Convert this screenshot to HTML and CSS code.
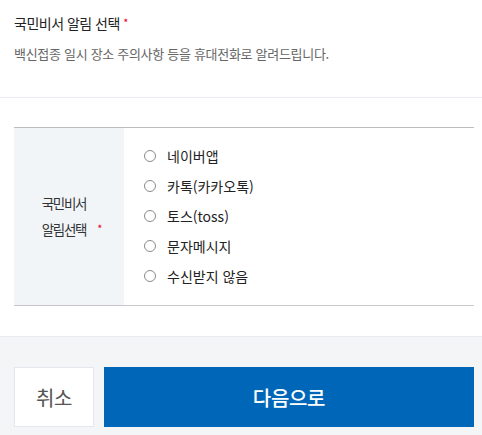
FILE: index.html
```html
<!DOCTYPE html>
<html lang="ko">
<head>
<meta charset="utf-8">
<link rel="stylesheet" href="styles.css">
</head>
<body>
<div class="page">
  <section class="intro">
    <h2 class="title">국민비서 알림 선택 <span class="req">*</span></h2>
    <p class="desc">백신접종 일시 장소 주의사항 등을 휴대전화로 알려드립니다.</p>
  </section>
  <section class="form">
    <div class="row">
      <div class="label"><span class="label-text">국민비서<br>알림선택<span class="req req-after"><span class="req-mark">*</span></span></span></div>
      <div class="options">
        <label class="opt"><span class="radio"></span>네이버앱</label>
        <label class="opt"><span class="radio"></span>카톡(카카오톡)</label>
        <label class="opt"><span class="radio"></span>토스(toss)</label>
        <label class="opt"><span class="radio"></span>문자메시지</label>
        <label class="opt"><span class="radio"></span>수신받지 않음</label>
      </div>
    </div>
  </section>
  <footer class="footer">
    <button class="btn cancel">취소</button>
    <button class="btn next">다음으로</button>
  </footer>
</div>
</body>
</html>
```
FILE: styles.css
```css
* { box-sizing: border-box; }
html, body { margin: 0; padding: 0; background: #fff; }
body {
  font-family: "Noto Sans CJK KR", "Noto Sans", sans-serif;
  color: #222;
  width: 482px;
  height: 435px;
  overflow: hidden;
}
.page { display: flex; flex-direction: column; height: 435px; }
.intro {
  padding: 12px 14px 33px;
  border-bottom: 1px solid #e8ebf0;
}
.title {
  margin: 0;
  font-size: 14px;
  line-height: 20px;
  font-weight: 400;
  letter-spacing: -0.5px;
  color: #222;
}
.req { color: #e60012; font-size: 11px; vertical-align: 2px; }
.desc {
  margin: 11px 0 0;
  font-size: 13px;
  line-height: 20px;
  color: #666;
  letter-spacing: -0.3px;
}
.form { padding: 29px 8px 30px 14px; }
.row {
  display: flex;
  border-top: 1px solid #bdbdbd;
  border-bottom: 1px solid #c8c8cc;
}
.label {
  width: 110px;
  background: #f2f5f8;
  display: flex;
  align-items: center;
  justify-content: center;
  padding-right: 10px;
}
.label-text {
  display: block;
  text-align: center;
  font-size: 13.5px;
  line-height: 25px;
  color: #333;
  letter-spacing: -1.3px;
}
.req-after {
  display: inline-block;
  width: 0;
  white-space: nowrap;
  letter-spacing: 0;
}
.req-mark { display: inline-block; margin-left: 11px; }
.options {
  flex: 1;
  padding: 13px 0 14px 20px;
  display: flex;
  flex-direction: column;
}
.opt {
  display: flex;
  align-items: center;
  height: 30px;
  font-size: 14px;
  color: #222;
  letter-spacing: 0;
}
.radio {
  width: 12px;
  height: 12px;
  border: 1px solid #8a8a8a;
  border-radius: 50%;
  margin-right: 11px;
  flex: none;
}
.footer {
  flex: 1;
  background: #f4f5f7;
  border-top: 1px solid #e8ebf0;
  padding: 30px 8px 0 14px;
  display: flex;
  gap: 10px;
  align-items: flex-start;
}
.btn {
  font-family: inherit;
  height: 60px;
  font-size: 20px;
  border-radius: 0;
  cursor: pointer;
  letter-spacing: -0.3px;
}
.cancel {
  width: 80px;
  background: #fff;
  border: 1px solid #e4e7ee;
  color: #555;
}
.next {
  flex: 1;
  background: #0067b8;
  border: none;
  color: #fff;
  font-weight: 500;
}
```
